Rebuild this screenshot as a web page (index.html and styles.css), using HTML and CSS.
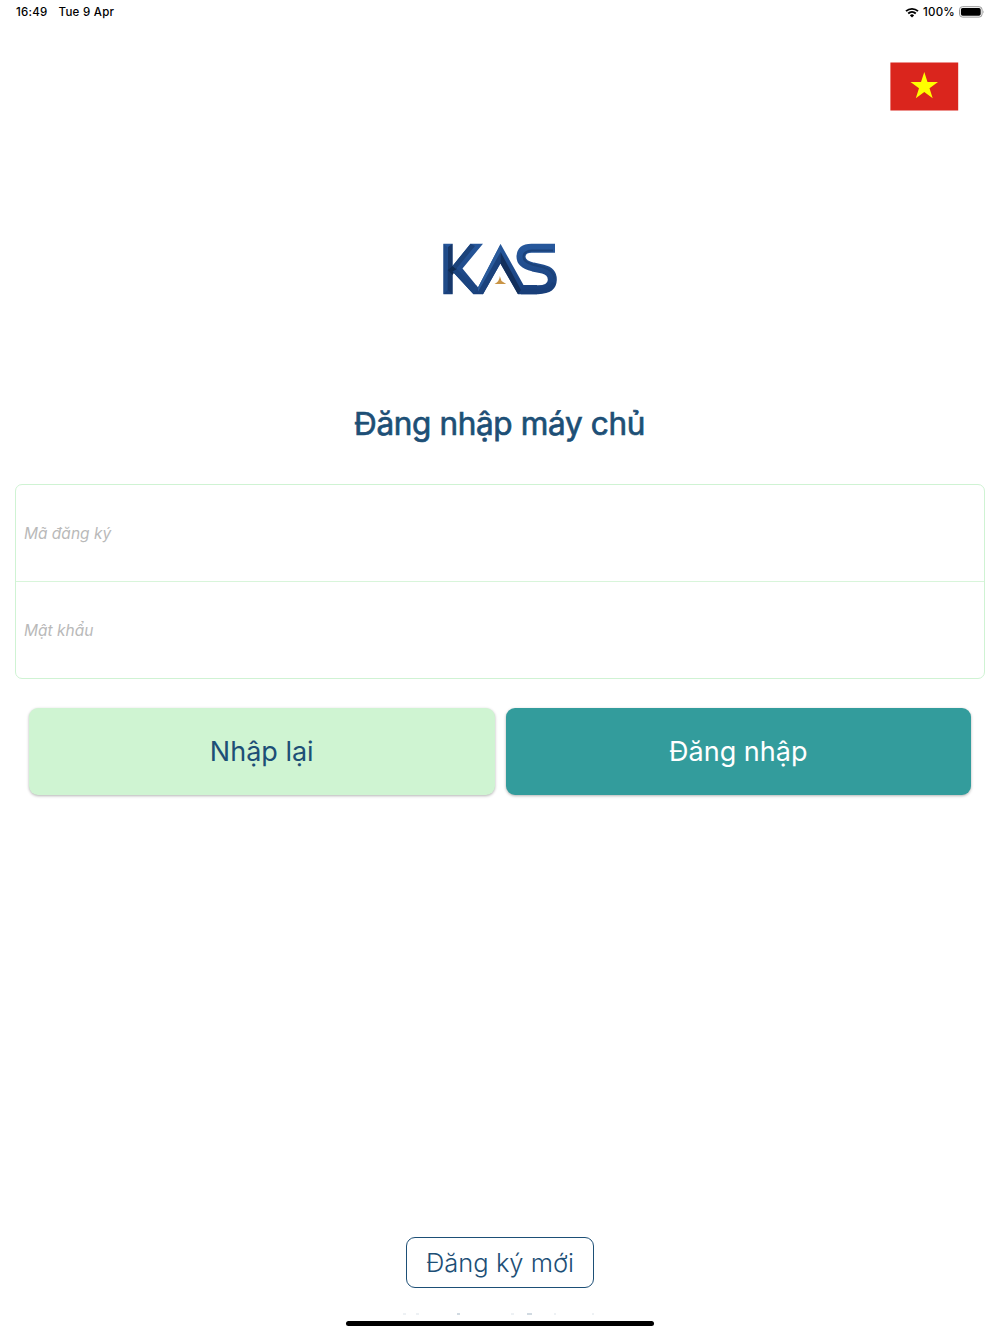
FILE: index.html
```html
<!DOCTYPE html>
<html lang="vi">
<head>
  <meta charset="UTF-8" />
  <meta name="viewport" content="width=device-width, initial-scale=1.0"/>
  <title>KAS</title>
  <link rel="stylesheet" href="styles.css">
</head>
<body>

  <header class="status">
    <span class="time">16:49</span>
    <span class="date">Tue 9 Apr</span>
    <svg class="wifi" width="14" height="11" viewBox="0 0 14 11">
      <path d="M1 4.2A8.7 8.7 0 0 1 13 4.2M3.2 6.5A5.5 5.5 0 0 1 10.8 6.5" fill="none" stroke="#000" stroke-width="1.8"/>
      <path d="M7 10.5L4.9 8.4A3 3 0 0 1 9.1 8.4Z"/>
    </svg>
    <span class="percent">100%</span>
    <svg class="battery" width="26" height="12" viewBox="0 0 26 12">
      <rect x=".5" y=".7" width="22.6" height="10.4" rx="3" fill="none" stroke="#999"/>
      <rect x="1.9" y="2.1" width="19.8" height="7.6" rx="1.7"/>
      <path d="M24.3 4.2Q25.7 5.9 24.3 7.6Z" fill="#999"/>
    </svg>
  </header>

  <div class="lang">
    <svg width="69" height="49" viewBox="0 0 69 49">
      <rect x=".4" y=".5" width="67.8" height="48" fill="#da251d"/>
      <path d="M34.3 10.1L37.5 20H48L39.5 26.2L42.7 36.3L34.3 30.1L25.8 36.3L29 26.2L20.5 20H31Z" fill="#ff0"/>
    </svg>
  </div>

  <main>
    <svg class="logo" width="116" height="54" viewBox="0 0 116 54">
      <defs>
        <linearGradient id="blue" x1="0" y1="0" x2="0" y2="1">
          <stop offset="0" stop-color="#26579b"/>
          <stop offset="1" stop-color="#193f7b"/>
        </linearGradient>
      </defs>
      <!-- K -->
      <path d="M1.5 1.7H10.5V24L28.5 1.7H41L20.5 26.5L36 45.5L58.6 2L81.5 43H95V52.3H76L58.4 21.5L41 52.3H31.5L10.5 29.5V52.3H1.5Z" fill="url(#blue)"/>
      <path d="M1.5 1.7L5.7 5.5V48L1.5 52.3Z" fill="#204b88"/>
      <path d="M10.5 1.7V24L6 28V5Z" fill="#173768"/>
      <path d="M5.8 28L10.5 24L15 27L10.5 29.5V52.3L5.8 48Z" fill="#17386b"/>
      <path d="M5.8 28L10.5 24L15 27L10.5 33Z" fill="#102b52"/>
      <path d="M10.5 24L28.5 1.7L33 4L14 27Z" fill="#1b427a"/>
      <path d="M20.5 26.5L36 45.5L31.5 52.3L10.5 29.5L15 27L32 46L34 43Z" fill="#1c4580"/>
      <!-- A -->
      <path d="M36 45.5L58.6 2V13L36 50Z" fill="#2a5b9c"/>
      <path d="M58.6 10L58.4 21.5L41 52.3L36 50Z" fill="#1b427c"/>
      <path d="M58.6 10L79 48L76 52.3L58.4 21.5Z" fill="#132f5b"/>
      <path d="M57.8 34L59.5 39L64.2 42H52.5Q57.8 39 57.8 34Z" fill="#c99445"/>
      <!-- S -->
      <path d="M113 6.2H89.5Q79.5 6.2 79 14.5Q78.8 22 91 25L101 27.2Q110.5 29.5 110.3 38Q110 47.5 96 47.7H79" fill="none" stroke="url(#blue)" stroke-width="9"/>
      <path d="M111 8.5H90Q81.5 9 81.5 15Q81.5 20 91 22.8L101 25.2Q112 28 112.5 37" fill="none" stroke="#1b427a" stroke-width="2"/>
      <path d="M79 49.5H97Q109 49.3 112 41" fill="none" stroke="#193f79" stroke-width="4"/>
    </svg>

    <h1>Đăng nhập máy chủ</h1>

    <form>
      <div class="fields">
        <input type="text" placeholder="Mã đăng ký">
        <input type="password" placeholder="Mật khẩu">
      </div>
      <div class="buttons">
        <button type="reset" class="reset">Nhập lại</button>
        <button type="button" class="login">Đăng nhập</button>
      </div>
    </form>
  </main>

  <footer>
    <button class="register">Đăng ký mới</button>
    <!-- tops of the next line, cut off by the screen edge -->
    <svg class="cutoff" width="194" height="2" viewBox="0 0 194 2">
      <path d="M0 1H3M13 1H16M108 1H111M151 1H153M189 1H191" stroke="#dce3e9"/>
      <path d="M54 1H57M124 1H129" stroke="#a3b5c4"/>
    </svg>
    <div class="home-bar"></div>
  </footer>

</body>
</html>
```

FILE: styles.css
```css
*{margin:0;padding:0;box-sizing:border-box}
body{height:1334px;overflow:hidden;display:flex;flex-direction:column;font-family:Inter,"Noto Sans",sans-serif;background:#fff;color:#1d4f76}
button,input{font-family:inherit}
svg{display:block}
.status{height:24px;display:flex;align-items:center;padding:0 15px 0 16px;font-size:11.5px;font-weight:500;letter-spacing:0.25px;color:#000}
.date{margin-left:11px}
.wifi{margin-left:auto}
.percent{margin:0 4px 0 3.5px}
.lang{display:flex;justify-content:flex-end;padding:38px 41px 0 0}
.logo{margin:131px auto 0}
h1{margin-top:106px;padding-right:1px;height:44px;line-height:44px;text-align:center;font-size:31.5px;font-weight:400;letter-spacing:-0.35px;-webkit-text-stroke:0.7px #1d4f76}
.fields{margin:38px 15px 0;height:195px;display:flex;flex-direction:column;border:1px solid #cff3d3;border-radius:7px;overflow:hidden}
.fields input{flex:1;width:100%;padding:0 8px;border:none;outline:none;background:none;font-size:15.5px}
.fields input+input{border-top:1px solid #d8f5da}
.fields input::placeholder{color:#b9b9b9;font-style:italic;font-weight:370}
.buttons{display:flex;gap:11px;padding:29px 29px 0}
.buttons button{flex:1;height:87px;border:none;border-radius:9px;font-size:27px;font-weight:370;box-shadow:0 1px 3px rgba(0,0,0,0.3)}
.reset{background:#cff4d2;color:#1d4f76}
.login{background:#339c9c;color:#fff}
footer{margin-top:auto;height:97px;display:flex;flex-direction:column;align-items:center}
.register{width:188px;height:51px;border:1px solid #1d4f76;border-radius:9px;background:#fff;color:#1d4f76;font-size:25.5px;font-weight:350}
.cutoff{margin-top:25px}
.home-bar{margin-top:6px;width:308px;height:5px;border-radius:3px;background:#000}
```
